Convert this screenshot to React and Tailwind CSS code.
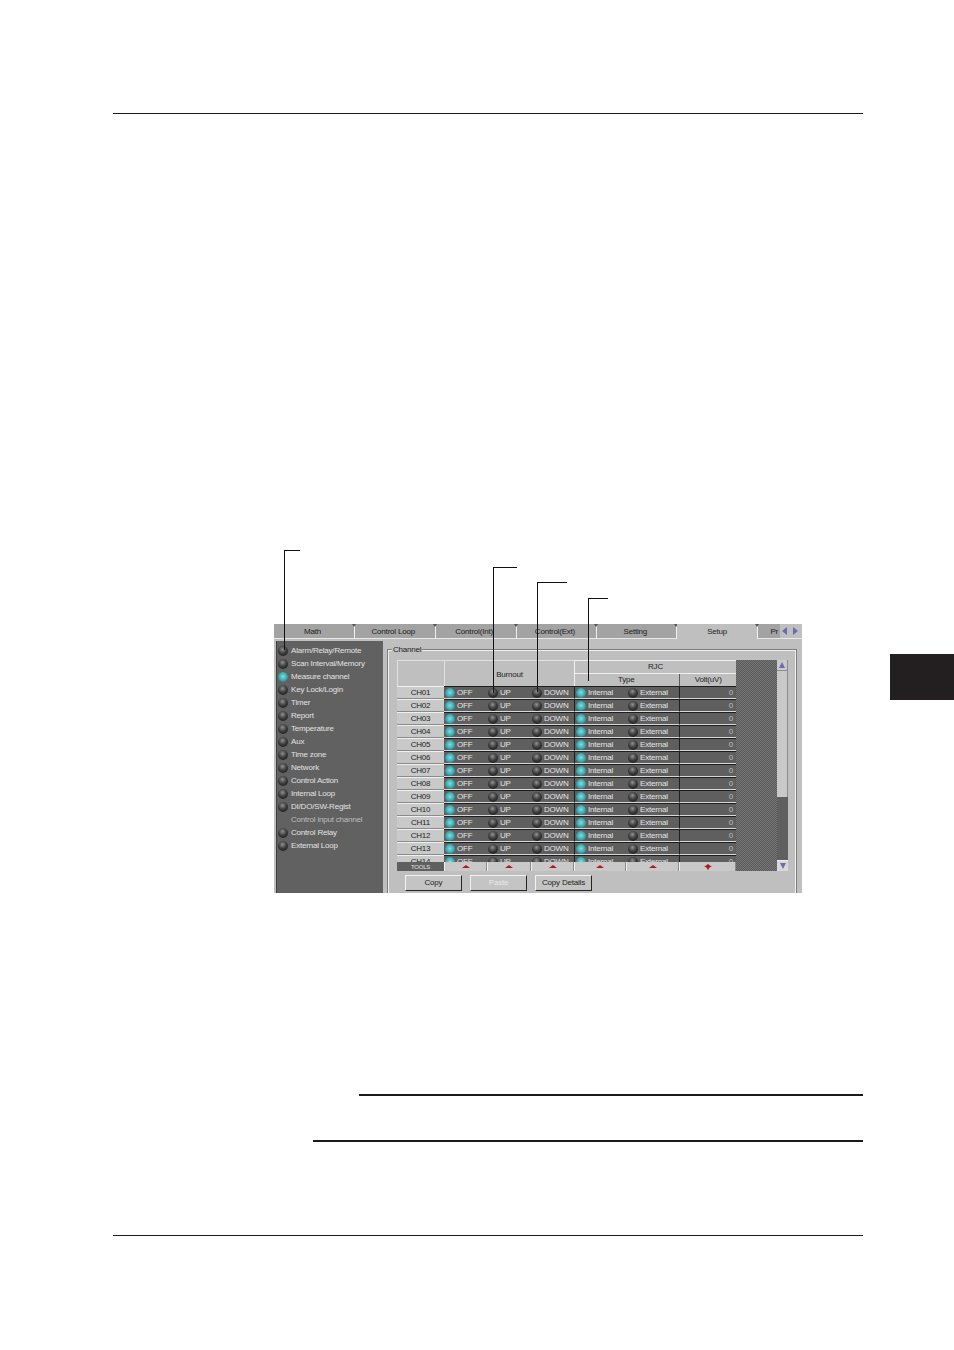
import React from 'react';

const TABS = [
  { label: 'Math', w: 'w-[81px]' },
  { label: 'Control Loop', w: 'w-[81px]' },
  { label: 'Control(Int)', w: 'w-[81px]' },
  { label: 'Control(Ext)', w: 'w-[81px]' },
  { label: 'Setting', w: 'w-[80px]' },
  { label: 'Setup', w: 'w-[81px]', active: true },
];

const MENU = [
  { label: 'Alarm/Relay/Remote' },
  { label: 'Scan Interval/Memory' },
  { label: 'Measure channel', on: true },
  { label: 'Key Lock/Login' },
  { label: 'Timer' },
  { label: 'Report' },
  { label: 'Temperature' },
  { label: 'Aux' },
  { label: 'Time zone' },
  { label: 'Network' },
  { label: 'Control Action' },
  { label: 'Internal Loop' },
  { label: 'DI/DO/SW-Regist' },
  { label: 'Control input channel', noLed: true },
  { label: 'Control Relay' },
  { label: 'External Loop' },
];

const CHANNELS = ['CH01', 'CH02', 'CH03', 'CH04', 'CH05', 'CH06', 'CH07', 'CH08', 'CH09', 'CH10', 'CH11', 'CH12', 'CH13', 'CH14'];

// leader lines that run from the caption area into the panel
const LEADERS = [
  'left-[284px] top-[550px] w-[16px] h-[100px]',
  'left-[493px] top-[567px] w-[24px] h-[126px]',
  'left-[537px] top-[582px] w-[30px] h-[110px]',
  'left-[588px] top-[598px] w-[20px] h-[83px]',
];

const Led = ({ on }) => (
  <span
    className={`block w-[10px] h-[10px] rounded-full shrink-0 ${
      on
        ? 'bg-[radial-gradient(circle_at_50%_45%,#86dede_0%,#35a5aa_55%,#1b5860_100%)]'
        : 'bg-[radial-gradient(circle_at_45%_35%,#8e8e8e_0%,#3c3c3c_45%,#0c0c0c_100%)]'
    }`}
  />
);

const Option = ({ on, label, className }) => (
  <div className={`flex items-center h-full pl-[1px] gap-[2px] text-[#e4e4e4] ${className}`}>
    <Led on={on} />
    <span className="pt-[1px]">{label}</span>
  </div>
);

const ChannelRow = ({ name }) => (
  <div className="flex h-[13px] shrink-0">
    <div className="w-[47px] flex items-center justify-center pt-[1px] bg-[#c9c9c9] border-t border-[#f0f0f0] border-b border-b-[#8a8a8a] text-[#222222]">
      {name}
    </div>
    <div className="flex w-[130px] bg-[#5e5e5e] border-t border-[#1c1c1c] border-b border-b-[#d8d8d8]">
      <Option on label="OFF" className="w-[43px]" />
      <Option label="UP" className="w-[44px]" />
      <Option label="DOWN" className="w-[43px]" />
    </div>
    <div className="flex w-[105px] bg-[#5e5e5e] border-l border-[#1c1c1c] border-t border-t-[#1c1c1c] border-b border-b-[#d8d8d8]">
      <Option on label="Internal" className="w-[52px]" />
      <Option label="External" className="w-[52px]" />
    </div>
    <div className="w-[57px] flex items-center justify-end pr-[3px] pt-[1px] bg-[#5e5e5e] border-l border-[#1c1c1c] border-t border-t-[#1c1c1c] border-b border-b-[#d8d8d8] text-[#bdbdbd]">
      0
    </div>
  </div>
);

const ToolCell = ({ className, double }) => (
  <div className={`h-full flex flex-col items-center justify-center bg-[#c9c9c9] border-l border-[#f0f0f0] border-r border-r-[#8a8a8a] ${className}`}>
    <span className="block w-0 h-0 border-x-[4px] border-x-transparent border-b-[3px] border-b-[#b01818]" />
    {double && <span className="block w-0 h-0 border-x-[2px] border-x-transparent border-t-[3px] border-t-[#b01818]" />}
  </div>
);

const ToolButton = ({ children, disabled }) => (
  <button className={`w-[57px] h-[16px] flex items-center justify-center bg-[#c4c4c4] border border-t-[#f2f2f2] border-l-[#f2f2f2] border-r-[#222222] border-b-[#222222] ${disabled ? 'text-[#e8e8e8]' : 'text-[#222222]'}`}>
    {children}
  </button>
);

const Panel = () => (
  <div className="w-[528px] h-[269px] shrink-0 flex flex-col bg-[#bfbfbf] text-[8px] leading-none tracking-[-0.2px] opacity-[0.99] overflow-hidden font-['Liberation_Sans',Arial,sans-serif]">
    {/* tabs */}
    <div className="flex h-[15px] shrink-0 bg-[#a2a2a2]">
      {TABS.map((t) => (
        <div
          key={t.label}
          className={`relative flex items-center justify-center pt-[1px] text-[#1c1c1c] border-r border-[#f0f0f0] ${t.w} ${
            t.active ? 'bg-[#bfbfbf]' : 'pr-[3px] border-b border-b-[#e8e8e8]'
          }`}
        >
          {t.label}
          <span className="absolute top-0 right-[-2px] w-0 h-0 border-x-[2px] border-x-transparent border-t-[3px] border-t-[#555555]" />
        </div>
      ))}
      <div className="w-[22px] flex items-center justify-end pr-[2px] pt-[1px] border-b border-[#e8e8e8] text-[#1c1c1c] overflow-hidden">Pr</div>
      <div className="w-[22px] flex items-center gap-[6px] bg-[#bfbfbf] border-b border-[#e8e8e8] pl-[2px]">
        <span className="block w-0 h-0 border-y-[4px] border-y-transparent border-r-[5px] border-r-[#6a6ab0]" />
        <span className="block w-0 h-0 border-y-[4px] border-y-transparent border-l-[5px] border-l-[#6a6ab0]" />
      </div>
    </div>

    <div className="flex flex-1 min-h-0 pt-[2px] pl-[2px]">
      {/* side menu */}
      <div className="w-[107px] shrink-0 bg-[#606060] border-l border-[#3a3a3a] pl-[1px] pt-[3px] flex flex-col">
        {MENU.map((m) => (
          <div key={m.label} className={`flex items-center h-[13px] gap-[3px] ${m.noLed ? 'text-[#bcbcbc]' : 'text-[#e2e2e2]'}`}>
            {m.noLed ? <span className="w-[10px] shrink-0" /> : <Led on={m.on} />}
            <span className="whitespace-nowrap">{m.label}</span>
          </div>
        ))}
      </div>

      {/* channel group */}
      <div className="flex-1 min-w-0 pl-[5px] pt-[9px] pr-[6px] flex flex-col relative">
        <span className="absolute left-[9px] top-[5px] bg-[#bfbfbf] px-[1px] text-[#1c1c1c] z-10">Channel</span>
        <div className="flex-1 border-t border-l border-r border-[#f0f0f0] outline outline-1 outline-[#7c7c7c] pl-[8px] pt-[9px] pr-[8px] flex flex-col">
          <div className="flex h-[211px] shrink-0">
            <div className="w-[339px] shrink-0 flex flex-col">
              {/* header */}
              <div className="flex h-[26px] shrink-0 text-[#1c1c1c]">
                <div className="w-[47px] border-l border-t border-[#e0e0e0]" />
                <div className="w-[130px] flex items-center justify-center pt-[2px] border-l border-t border-[#e0e0e0]">Burnout</div>
                <div className="w-[162px] flex flex-col border-l border-t border-[#f0f0f0]">
                  <div className="h-[13px] flex items-center justify-center border-b border-[#f0f0f0]">RJC</div>
                  <div className="flex flex-1">
                    <div className="w-[105px] flex items-center justify-center pr-[2px]">Type</div>
                    <div className="w-[57px] flex items-center justify-center border-l border-[#5a5a5a]">Volt(uV)</div>
                  </div>
                </div>
              </div>
              {/* rows, last one is cut off by the tools strip */}
              <div className="h-[176px] shrink-0 overflow-hidden flex flex-col">
                {CHANNELS.map((c) => (
                  <ChannelRow key={c} name={c} />
                ))}
              </div>
              <div className="flex h-[9px] shrink-0">
                <div className="w-[47px] flex items-center justify-center bg-[#5e5e5e] text-[#e4e4e4] text-[6px]">TOOLS</div>
                <ToolCell className="w-[43px]" />
                <ToolCell className="w-[44px]" />
                <ToolCell className="w-[43px]" />
                <ToolCell className="w-[52px]" />
                <ToolCell className="w-[53px]" />
                <ToolCell className="w-[57px]" double />
              </div>
            </div>
            {/* hatched empty area */}
            <div className="w-[41px] shrink-0 bg-[repeating-conic-gradient(#5a5a5a_0_25%,#747474_0_50%)] bg-[length:2px_2px]" />
            {/* scrollbar */}
            <div className="w-[11px] shrink-0 flex flex-col bg-[#5e5e5e]">
              <div className="h-[11px] flex items-center justify-center bg-[#c9c9c9] border-b border-r border-[#8a8a8a]">
                <span className="block w-0 h-0 border-x-[3px] border-x-transparent border-b-[6px] border-b-[#6a6ab0]" />
              </div>
              <div className="h-[126px] bg-[#c9c9c9] border-r border-[#8a8a8a]" />
              <div className="flex-1" />
              <div className="h-[11px] flex items-center justify-center bg-[#d8d8d8] border-t border-[#f0f0f0]">
                <span className="block w-0 h-0 border-x-[3px] border-x-transparent border-t-[6px] border-t-[#6a6ab0]" />
              </div>
            </div>
          </div>
          <div className="flex gap-[8px] pl-[8px] pt-[4px]">
            <ToolButton>Copy</ToolButton>
            <ToolButton disabled>Paste</ToolButton>
            <ToolButton>Copy Details</ToolButton>
          </div>
        </div>
      </div>
    </div>
  </div>
);

export default function App() {
  return (
    <div className="relative w-[954px] h-[1350px] bg-white overflow-hidden flex flex-col">
      <div className="mt-[113px] ml-[113px] w-[750px] h-px bg-[#1a1a1a] shrink-0" />

      <div className="mt-[510px] flex items-start shrink-0">
        <div className="ml-[274px]">
          <Panel />
        </div>
        <div className="ml-auto mt-[30px] w-[64px] h-[46px] bg-[#231f20]" />
      </div>

      <div className="mt-[201px] ml-[359px] w-[504px] h-[2px] bg-[#1a1a1a] shrink-0" />
      <div className="mt-[44px] ml-[313px] w-[550px] h-[2px] bg-[#1a1a1a] shrink-0" />
      <div className="mt-[93px] ml-[113px] w-[750px] h-px bg-[#1a1a1a] shrink-0" />

      {LEADERS.map((l) => (
        <div key={l} className={`absolute border-l border-t border-[#111111] ${l}`} />
      ))}
    </div>
  );
}
